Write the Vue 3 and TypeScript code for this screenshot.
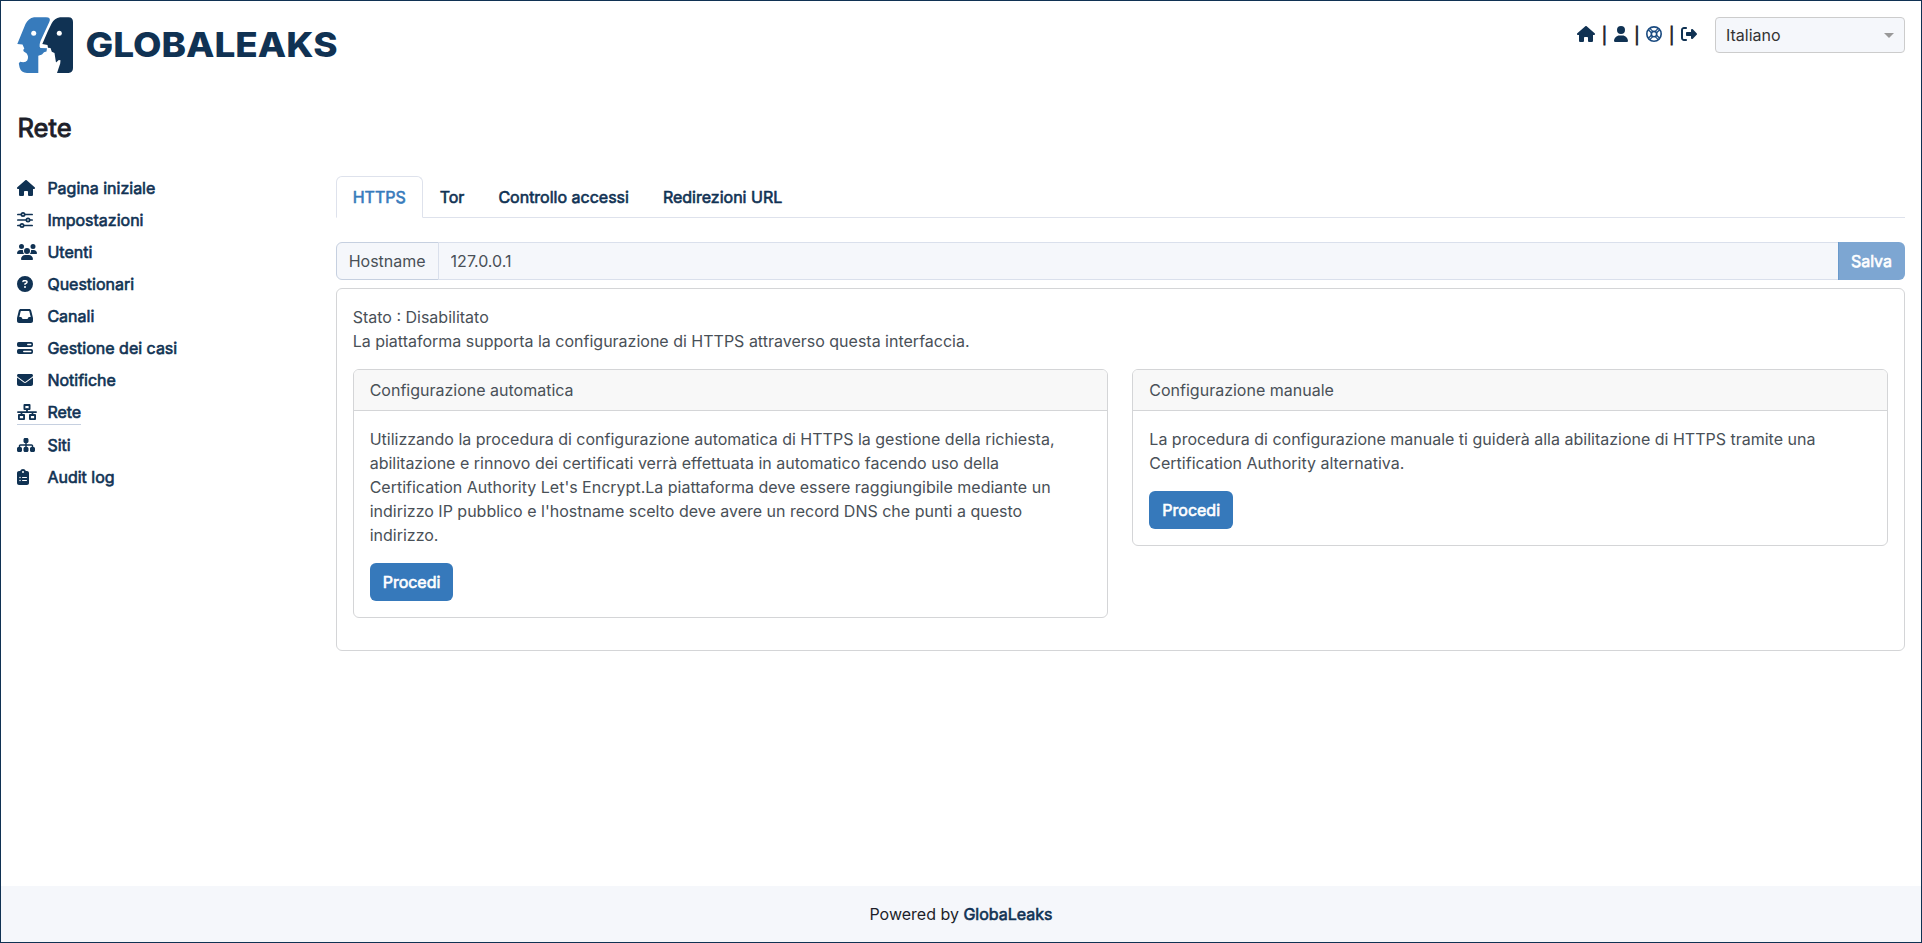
<script setup lang="ts">
import { ref } from 'vue'

interface NavItem {
  label: string
  icon: string
  width: number
}

const items: NavItem[] = [
  { label: 'Pagina iniziale', icon: 'home', width: 18 },
  { label: 'Impostazioni', icon: 'sliders', width: 16 },
  { label: 'Utenti', icon: 'users', width: 20 },
  { label: 'Questionari', icon: 'question', width: 16 },
  { label: 'Canali', icon: 'inbox', width: 16 },
  { label: 'Gestione dei casi', icon: 'server', width: 16 },
  { label: 'Notifiche', icon: 'envelope', width: 16 },
  { label: 'Rete', icon: 'network', width: 20 },
  { label: 'Siti', icon: 'sitemap', width: 18 },
  { label: 'Audit log', icon: 'clipboard', width: 12 },
]
const current = ref('Rete')
const tabs = ['HTTPS', 'Tor', 'Controllo accessi', 'Redirezioni URL']
const activeTab = ref('HTTPS')
const hostname = ref('127.0.0.1')
</script>

<template>
  <div class="page">
    <svg class="defs" width="0" height="0">
      <symbol id="home" viewBox="0 0 576 512">
        <path d="M575.8 255.5c0 18-15 32.1-32 32.1h-32l.7 160.2c0 2.7-.2 5.4-.5 8.1V472c0 22.1-17.9 40-40 40H456c-1.1 0-2.2 0-3.3-.1c-1.4 .1-2.8 .1-4.2 .1H416 392c-22.1 0-40-17.9-40-40V448 384c0-17.7-14.3-32-32-32H256c-17.7 0-32 14.3-32 32v64 24c0 22.1-17.9 40-40 40H160 128.1c-1.5 0-3-.1-4.5-.2c-1.2 .1-2.4 .2-3.6 .2H104c-22.1 0-40-17.9-40-40V360c0-.9 0-1.9 .1-2.8V287.6H32c-18 0-32-14-32-32.1c0-9 3-17 10-24L266.4 8c7-7 15-8 22-8s15 2 21 7L564.8 231.5c8 7 12 15 11 24z" />
      </symbol>
      <symbol id="user" viewBox="0 0 448 512">
        <path d="M224 256A128 128 0 1 0 224 0a128 128 0 1 0 0 256zm-45.7 48C79.8 304 0 383.8 0 482.3C0 498.7 13.3 512 29.7 512H418.3c16.4 0 29.7-13.3 29.7-29.7C448 383.8 368.2 304 269.7 304H178.3z" />
      </symbol>
      <symbol id="ring" viewBox="0 0 512 512">
        <g fill="none" stroke="currentColor" stroke-width="52">
          <circle cx="256" cy="256" r="230" />
          <circle cx="256" cy="256" r="86" />
          <path d="M75 121l105 105M121 75l105 105M437 121L332 226M391 75L286 180M75 391l105-105M121 437l105-105M437 391L332 286M391 437L286 332" stroke-width="40" />
        </g>
      </symbol>
      <symbol id="exit" viewBox="0 0 512 512">
        <path d="M377.9 105.9L500.7 228.7c7.2 7.2 11.3 17.1 11.3 27.3s-4.1 20.1-11.3 27.3L377.9 406.1c-6.4 6.4-15 9.9-24 9.9c-18.7 0-33.9-15.2-33.9-33.9l0-62.1-128 0c-17.7 0-32-14.3-32-32l0-64c0-17.7 14.3-32 32-32l128 0 0-62.1c0-18.7 15.2-33.9 33.9-33.9c9 0 17.6 3.6 24 9.9zM160 96L96 96c-17.7 0-32 14.3-32 32l0 256c0 17.7 14.3 32 32 32l64 0c17.7 0 32 14.3 32 32s-14.3 32-32 32l-64 0c-53 0-96-43-96-96L0 128C0 75 43 32 96 32l64 0c17.7 0 32 14.3 32 32s-14.3 32-32 32z" />
      </symbol>
      <symbol id="sliders" viewBox="0 0 512 512">
        <g fill="none" stroke="currentColor" stroke-width="54" stroke-linecap="round">
          <path d="M27 80h104M260 80h225M27 256h264M420 256h65M27 432h72M228 432h257" />
          <circle cx="192" cy="80" r="53" />
          <circle cx="352" cy="256" r="53" />
          <circle cx="160" cy="432" r="53" />
        </g>
      </symbol>
      <symbol id="users" viewBox="0 0 640 512">
        <path d="M144 0a80 80 0 1 1 0 160A80 80 0 1 1 144 0zM512 0a80 80 0 1 1 0 160A80 80 0 1 1 512 0zM0 298.7C0 239.8 47.8 192 106.7 192h42.7c15.9 0 31 3.5 44.6 9.7c-1.3 7.2-1.9 14.7-1.9 22.3c0 38.2 16.8 72.5 43.3 96H21.300C9.600 320 0 310.400 0 298.700zM405.300 320c26.600-23.500 43.300-57.800 43.300-96c0-7.600-.7-15-1.900-22.300c13.600-6.300 28.700-9.700 44.600-9.700h42.700C592.200 192 640 239.800 640 298.700c0 11.800-9.600 21.300-21.300 21.300H405.300zM224 224a96 96 0 1 1 192 0 96 96 0 1 1-192 0zM128 485.300C128 411.700 187.700 352 261.300 352h117.400C452.300 352 512 411.700 512 485.300c0 14.700-11.900 26.700-26.700 26.700H154.700c-14.700 0-26.700-11.900-26.700-26.700z" />
      </symbol>
      <symbol id="question" viewBox="0 0 512 512">
        <path d="M256 512A256 256 0 1 0 256 0a256 256 0 1 0 0 512zM169.800 165.300c7.900-22.300 29.100-37.300 52.800-37.300h58.300c34.900 0 63.100 28.300 63.100 63.100c0 22.600-12.100 43.500-31.700 54.800L280 264.400c-.2 13-10.900 23.600-24 23.600c-13.300 0-24-10.700-24-24V250.500c0-8.600 4.600-16.500 12.100-20.800l44.300-25.400c4.700-2.700 7.600-7.700 7.600-13.100c0-8.400-6.800-15.100-15.100-15.100H222.600c-3.400 0-6.400 2.100-7.500 5.300l-.4 1.200c-4.400 12.500-18.200 19-30.600 14.600s-19-18.200-14.600-30.600l.4-1.200zM224 352a32 32 0 1 1 64 0 32 32 0 1 1 -64 0z" />
      </symbol>
      <symbol id="inbox" viewBox="0 0 512 512">
        <path d="M121 32C91.600 32 66 52 58.900 80.500L1.900 308.400C.6 313.500 0 318.700 0 323.900V416c0 35.300 28.700 64 64 64H448c35.300 0 64-28.700 64-64V323.900c0-5.200-.6-10.400-1.900-15.500l-57-227.900C446 52 420.400 32 391 32H121zm0 64H391l48 192H387.800c-12.100 0-23.200 6.800-28.600 17.700l-14.300 28.600c-5.400 10.800-16.500 17.700-28.600 17.700H195.800c-12.100 0-23.200-6.800-28.600-17.700l-14.300-28.600c-5.400-10.800-16.500-17.700-28.600-17.700H73L121 96z" />
      </symbol>
      <symbol id="server" viewBox="0 0 512 512">
        <path fill-rule="evenodd" d="M56 64h400a56 56 0 0 1 56 56v48a56 56 0 0 1-56 56H56a56 56 0 0 1-56-56v-48a56 56 0 0 1 56-56zM344 122a22 22 0 0 0 0 44h96a22 22 0 0 0 0-44zM56 288h400a56 56 0 0 1 56 56v48a56 56 0 0 1-56 56H56a56 56 0 0 1-56-56v-48a56 56 0 0 1 56-56zM216 346a22 22 0 0 0 0 44h224a22 22 0 0 0 0-44z" />
      </symbol>
      <symbol id="envelope" viewBox="0 0 512 512">
        <path d="M48 64C21.500 64 0 85.500 0 112c0 15.100 7.100 29.300 19.200 38.400L236.800 313.600c11.400 8.500 27 8.500 38.400 0L492.800 150.400c12.100-9.100 19.200-23.300 19.200-38.400c0-26.500-21.500-48-48-48H48zM0 176V384c0 35.300 28.700 64 64 64H448c35.300 0 64-28.700 64-64V176L294.400 339.200c-22.800 17.100-54 17.100-76.800 0L0 176z" />
      </symbol>
      <symbol id="network" viewBox="0 0 640 512">
        <g fill="none" stroke="currentColor" stroke-width="60" stroke-linejoin="round" stroke-linecap="round">
          <rect x="238" y="30" width="164" height="132" />
          <rect x="62" y="350" width="164" height="132" />
          <rect x="414" y="350" width="164" height="132" />
          <path d="M30 256h580M320 162v94M144 256v94M496 256v94" stroke-width="56" />
        </g>
      </symbol>
      <symbol id="sitemap" viewBox="0 0 576 512">
        <path d="M208 80c0-26.500 21.500-48 48-48h64c26.500 0 48 21.500 48 48v64c0 26.500-21.500 48-48 48h-8v40h152c30.900 0 56 25.100 56 56v32h8c26.500 0 48 21.500 48 48v64c0 26.500-21.500 48-48 48h-64c-26.500 0-48-21.500-48-48v-64c0-26.500 21.500-48 48-48h8v-32c0-4.400-3.600-8-8-8H312v40h8c26.500 0 48 21.500 48 48v64c0 26.500-21.500 48-48 48h-64c-26.500 0-48-21.500-48-48v-64c0-26.500 21.500-48 48-48h8v-40H112c-4.400 0-8 3.600-8 8v32h8c26.500 0 48 21.500 48 48v64c0 26.500-21.500 48-48 48H48c-26.500 0-48-21.500-48-48v-64c0-26.500 21.500-48 48-48h8v-32c0-30.900 25.100-56 56-56h152v-40h-8c-26.500 0-48-21.500-48-48z" />
      </symbol>
      <symbol id="clipboard" viewBox="0 0 384 512">
        <path fill-rule="evenodd" d="M192 0c-41.800 0-77.400 26.700-90.500 64H64C28.700 64 0 92.700 0 128v320c0 35.300 28.700 64 64 64h256c35.300 0 64-28.700 64-64V128c0-35.300-28.700-64-64-64h-37.500C269.400 26.700 233.800 0 192 0zm0 64a32 32 0 1 1 0 64 32 32 0 1 1 0-64zM72 272a24 24 0 1 1 48 0 24 24 0 1 1-48 0zm104-16h128a16 16 0 0 1 0 32H176a16 16 0 0 1 0-32zM72 368a24 24 0 1 1 48 0 24 24 0 1 1-48 0zm88 0a16 16 0 0 1 16-16h128a16 16 0 0 1 0 32H176a16 16 0 0 1-16-16z" />
      </symbol>
    </svg>

    <header class="header">
      <svg class="logo" viewBox="0 0 324 57" width="324" height="57" role="img" aria-label="GlobaLeaks">
        <path fill="#377bbc" d="M17 0.300H29Q34.500 0.300 32.300 5L23.500 24Q22.200 28 22.600 29.500L23.400 30.900L30 31.200L29.500 34.500L27 35.300L25 37.500L21.300 38.700V56H10Q4 55.500 2.600 50.500L1.800 46.500L3 44.800Q8.500 46 10.200 43.500Q12.200 39.500 9.500 36.300L6.800 34.500L6.200 33L7.300 31.500L5.500 27.500L0.300 27L4.600 16.500L8.500 7Q11.300 1.300 17 0.300Z" />
        <path fill="#103253" d="M43 0.300H51.500Q56 0.500 56 5V51Q56 55.500 51.500 56H40L43.200 46.500L43.500 43.300L41.800 43L39 45.500L38.500 42.500L37.500 36L34.800 34.800L33.500 31L31 30.800L30.500 28L25.300 27L30.500 15L34.600 6.500Q37.500 1 43 0.300Z" />
        <circle cx="16.700" cy="16.300" r="2.500" fill="#fff" />
        <circle cx="42.300" cy="16.300" r="2.500" fill="#fff" />
        <text class="wordmark" x="68.500" y="40" textLength="252" lengthAdjust="spacingAndGlyphs">GLOBALEAKS</text>
      </svg>
      <div class="tools">
        <svg class="icon" width="18" height="16"><use href="#home" /></svg>
        <span class="sep">|</span>
        <svg class="icon" width="14" height="16"><use href="#user" /></svg>
        <span class="sep">|</span>
        <svg class="icon help" width="16" height="16"><use href="#ring" /></svg>
        <span class="sep">|</span>
        <svg class="icon" width="16" height="16"><use href="#exit" /></svg>
        <div class="language"><span>Italiano</span><i class="caret"></i></div>
      </div>
    </header>

    <h1 class="title">Rete</h1>

    <div class="columns">
      <nav class="sidebar">
        <a v-for="item in items" :key="item.label" class="nav-item" :class="{ current: item.label === current }">
          <span class="nav-icon"><svg class="icon" :width="item.width" height="16"><use :href="'#' + item.icon" /></svg></span>
          <span class="strong">{{ item.label }}</span>
        </a>
      </nav>

      <main class="content">
        <div class="tabs">
          <a v-for="tab in tabs" :key="tab" class="tab strong" :class="{ active: tab === activeTab }" @click="activeTab = tab">{{ tab }}</a>
        </div>
        <div class="input-group">
          <span class="addon">Hostname</span>
          <input v-model="hostname" class="field" type="text" />
          <button class="button save strong" disabled>Salva</button>
        </div>
        <section class="card panel">
          <div>Stato : Disabilitato</div>
          <div>La piattaforma supporta la configurazione di HTTPS attraverso questa interfaccia.</div>
          <div class="options">
            <article class="card option">
              <div class="card-header">Configurazione automatica</div>
              <div class="card-body">
                <p>Utilizzando la procedura di configurazione automatica di HTTPS la gestione della richiesta, abilitazione e rinnovo dei certificati verrà effettuata in automatico facendo uso della Certification Authority Let's Encrypt.La piattaforma deve essere raggiungibile mediante un indirizzo IP pubblico e l'hostname scelto deve avere un record DNS che punti a questo indirizzo.</p>
                <button class="button strong">Procedi</button>
              </div>
            </article>
            <article class="card option">
              <div class="card-header">Configurazione manuale</div>
              <div class="card-body">
                <p>La procedura di configurazione manuale ti guiderà alla abilitazione di HTTPS tramite una Certification Authority alternativa.</p>
                <button class="button strong">Procedi</button>
              </div>
            </article>
          </div>
        </section>
      </main>
    </div>

    <footer class="footer">Powered by&nbsp;<a class="strong brand">GlobaLeaks</a></footer>
  </div>
</template>

<style>
body {
  margin: 0;
}
</style>

<style scoped>
.page {
  box-sizing: border-box;
  height: 100vh;
  display: flex;
  flex-direction: column;
  border: 1px solid #103253;
  background: #fff;
  color: #1d1f2a;
  font: 400 16px/24px Inter, sans-serif;
}
.page *,
.page *::before {
  box-sizing: border-box;
}
.defs {
  position: absolute;
}
.icon {
  display: block;
  fill: currentColor;
  flex: none;
}
.strong {
  -webkit-text-stroke: 0.62px currentColor;
}
.header {
  display: flex;
  justify-content: space-between;
  align-items: flex-start;
  padding: 16px 16px 0;
}
.logo {
  display: block;
}
.wordmark {
  font: 800 34px Inter, sans-serif;
  fill: #103253;
}
.tools {
  display: flex;
  align-items: flex-start;
  color: #103253;
}
.tools > .icon {
  margin-top: 9px;
}
.help {
  color: #1b4b80;
}
.sep {
  width: 18.660px;
  height: 24px;
  margin-top: 6px;
  text-align: center;
  color: #1d1f2a;
  font-size: 16px;
  -webkit-text-stroke: 0.8px currentColor;
}
.language {
  display: flex;
  align-items: center;
  justify-content: space-between;
  width: 190px;
  height: 36px;
  margin-left: 18px;
  padding: 0 10px;
  border: 1px solid #ccc;
  border-radius: 4px;
  background: #f5f7fb;
  color: #333;
}
.caret {
  border: 5px solid transparent;
  border-top-color: #999;
  border-bottom-width: 0;
}
.title {
  margin: 38px 16.500px 0;
  font-size: 25.600px;
  font-weight: 400;
  line-height: 32px;
  -webkit-text-stroke: 0.92px currentColor;
}
.columns {
  display: flex;
  flex: 1;
  padding: 32px 16px 0;
}
.sidebar {
  display: flex;
  flex-direction: column;
  align-items: flex-start;
  gap: 8px;
  width: 318.660px;
  color: #103253;
}
.nav-item {
  display: flex;
  align-items: center;
}
.nav-icon {
  width: 30.400px;
}
.current {
  border-bottom: 1px solid #c6d0e0;
}
.content {
  flex: 1;
  min-width: 0;
  color: #495057;
}
.tabs {
  display: flex;
  border-bottom: 1px solid #dee2ec;
  color: #103253;
}
.tab {
  margin-bottom: -1px;
  padding: 8px 16px;
  border: 1px solid transparent;
}
.tab.active {
  border-color: #dee2ec #dee2ec #fff;
  border-radius: 6px 6px 0 0;
  background: #fff;
  color: #377bbc;
}
.input-group {
  display: flex;
  height: 38px;
  margin: 24px 0 8px;
}
.addon {
  padding: 6px 12px;
  border: 1px solid #c6d0e0;
  border-radius: 6px 0 0 6px;
  background: #f5f7fb;
}
.field {
  flex: 1;
  margin-left: -1px;
  padding: 6px 12px;
  border: 1px solid #dae0ec;
  background: #f5f7fb;
  color: #495057;
  font: inherit;
}
.button {
  height: 38px;
  padding: 6px 13px;
  border: 0;
  border-radius: 6px;
  background: #3679bb;
  color: #fff;
  font: inherit;
}
.save {
  margin-left: -1px;
  border-left: 1px solid #6a9acc;
  padding-left: 12px;
  border-radius: 0 6px 6px 0;
  background: #7da6d2;
}
.card {
  border: 1px solid #d4d5d7;
  border-radius: 6px;
  background: #fff;
}
.panel {
  padding: 16px;
}
.options {
  display: grid;
  grid-template-columns: 1fr 1fr;
  align-items: start;
  gap: 24px;
  margin: 16px 0;
}
.option {
  overflow: hidden;
}
.card-header {
  padding: 8px 16px;
  border-bottom: 1px solid #d4d5d7;
  background: #f8f8f8;
}
.card-body {
  padding: 16px;
}
.card-body p {
  margin: 0 0 16px;
}
.card-body .button {
  display: block;
}
.footer {
  display: flex;
  justify-content: center;
  height: 56px;
  padding: 16px;
  background: #f5f7fb;
}
.brand {
  color: #103253;
}
</style>
